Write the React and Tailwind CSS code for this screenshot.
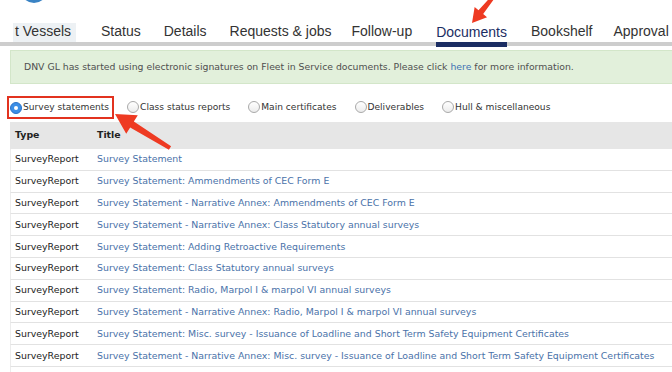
import React from "react";

const tabs = [
  { label: "t Vessels", cls: "ml-[13px] pl-[2px] pr-[5px] bg-[#edf1f4]" },
  { label: "Status", cls: "ml-[25px]" },
  { label: "Details", cls: "ml-[23px]" },
  { label: "Requests & jobs", cls: "ml-[23px]" },
  { label: "Follow-up", cls: "ml-[20px]" },
  { label: "Documents", active: true, cls: "ml-[24px]" },
  { label: "Bookshelf", cls: "ml-[24px]" },
  { label: "Approval", cls: "ml-[21px]" },
];

const filters = [
  { label: "Survey statements", checked: true },
  { label: "Class status reports" },
  { label: "Main certificates" },
  { label: "Deliverables" },
  { label: "Hull & miscellaneous" },
];

const rows = [
  "Survey Statement",
  "Survey Statement: Ammendments of CEC Form E",
  "Survey Statement - Narrative Annex: Ammendments of CEC Form E",
  "Survey Statement - Narrative Annex: Class Statutory annual surveys",
  "Survey Statement: Adding Retroactive Requirements",
  "Survey Statement: Class Statutory annual surveys",
  "Survey Statement: Radio, Marpol I & marpol VI annual surveys",
  "Survey Statement - Narrative Annex: Radio, Marpol I & marpol VI annual surveys",
  "Survey Statement: Misc. survey - Issuance of Loadline and Short Term Safety Equipment Certificates",
  "Survey Statement - Narrative Annex: Misc. survey - Issuance of Loadline and Short Term Safety Equipment Certificates",
  "",
];

// callout arrow polygon, tail -> tip
function arrowPoints(x1, y1, x2, y2, shaft, headLen, headHalf) {
  const dx = x2 - x1;
  const dy = y2 - y1;
  const len = Math.hypot(dx, dy);
  const ux = dx / len;
  const uy = dy / len;
  const px = -uy;
  const py = ux;
  const bx = x2 - ux * headLen;
  const by = y2 - uy * headLen;
  const s = shaft / 2;
  const pts = [
    [x1 + px * s * 0.6, y1 + py * s * 0.6],
    [bx + px * s, by + py * s],
    [bx + px * headHalf, by + py * headHalf],
    [x2, y2],
    [bx - px * headHalf, by - py * headHalf],
    [bx - px * s, by - py * s],
    [x1 - px * s * 0.6, y1 - py * s * 0.6],
  ];
  return pts.map((p) => p.join(",")).join(" ");
}

function Radio({ checked }) {
  if (checked) {
    return (
      <span className="w-[12px] h-[12px] rounded-full bg-[#3b8ee6] border border-[#2a73c9] flex items-center justify-center shrink-0">
        <span className="w-[4px] h-[4px] rounded-full bg-white" />
      </span>
    );
  }
  return (
    <span className="w-[12px] h-[12px] rounded-full border border-[#a9a9a9] bg-gradient-to-b from-[#ffffff] to-[#ececec] shrink-0" />
  );
}

export default function App() {
  return (
    <div className="relative w-[672px] h-[372px] overflow-hidden bg-white font-['DejaVu_Sans',Verdana,sans-serif]">
      <nav className="flex items-end pt-[23px] border-b-4 border-[#cdcdcd] font-['Liberation_Sans',Arial,sans-serif] text-[14px] text-[#333] whitespace-nowrap">
        {tabs.map((t) => (
          <div
            key={t.label}
            className={
              t.active
                ? `${t.cls} leading-[17px] pb-[1px] -mb-[5px] border-b-[5px] border-[#1b2d63] text-[#1b2d63]`
                : `${t.cls} leading-[17px] pb-[2px]`
            }
          >
            {t.label}
          </div>
        ))}
      </nav>

      <div className="mt-[4px] ml-[10px] h-[34px] flex items-center pl-[13px] bg-[#e2f0db] border border-[#d3e6c9] border-r-0 text-[9.3px] text-[#4f4f4f] whitespace-nowrap">
        <span>
          DNV GL has started using electronic signatures on Fleet in Service documents. Please click{" "}
          <span className="text-[#3f72b3]">here</span> for more information.
        </span>
      </div>

      <div className="mt-[12px] flex items-center text-[9.1px] text-[#333] whitespace-nowrap">
        {filters.map((f, i) => (
          <label
            key={f.label}
            className={
              f.checked
                ? "ml-[7px] h-[23px] flex items-center pl-[1px] pr-[3px] border-2 border-[#e2321f]"
                : i === 1
                ? "ml-[13px] flex items-center"
                : "ml-[18px] flex items-center"
            }
          >
            <Radio checked={f.checked} />
            <span className="ml-[1px]">{f.label}</span>
          </label>
        ))}
      </div>

      <div className="mt-[3px] ml-[10px] text-[9.4px] whitespace-nowrap">
        <div className="flex items-center h-[27px] bg-[#e6e6e6] font-bold text-[#222]">
          <div className="w-[82px] pl-[5px]">Type</div>
          <div className="pl-[5px]">Title</div>
        </div>
        {rows.map((r, i) => (
          <div key={i} className="flex items-center h-[21.8px] border-b border-[#e2e2e2] border-l border-l-[#ececec]">
            <div className="w-[81px] pl-[4px] text-[#222]">{r ? "SurveyReport" : ""}</div>
            <div className="pl-[5px] text-[#4a72a9]">{r}</div>
          </div>
        ))}
      </div>

      <svg className="absolute left-0 top-0 pointer-events-none" width="672" height="372">
        <ellipse cx="34" cy="-7" rx="12" ry="10" fill="#3a83c4" />
        <polygon points={arrowPoints(170, 148, 115, 114, 7, 20, 11)} fill="#ee3a22" />
        <polygon points={arrowPoints(494, -4, 472, 23, 6, 14, 8)} fill="#ee3a22" />
      </svg>
    </div>
  );
}
